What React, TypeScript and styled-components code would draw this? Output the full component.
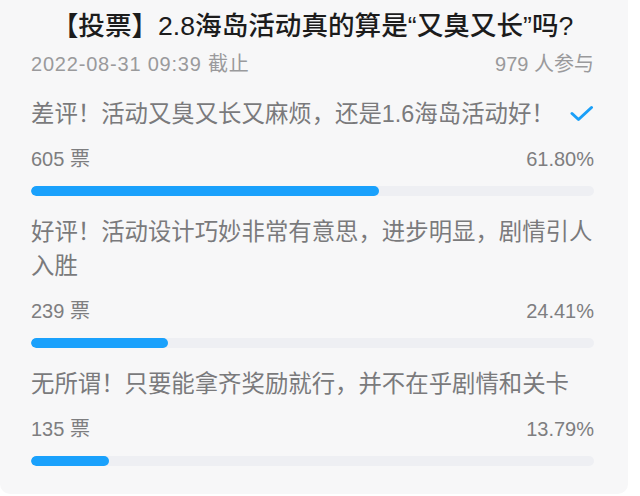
import React from 'react';
import styled, { createGlobalStyle } from 'styled-components';

const GlobalStyle = createGlobalStyle`
    body {
        margin: 0;
        background: #ffffff;
        font-family: 'Liberation Sans', 'Noto Sans CJK SC', sans-serif;
    }
`;

const options = [
    { text: '差评！活动又臭又长又麻烦，还是1.6海岛活动好！', votes: 605, percent: 61.8, chosen: true },
    { text: '好评！活动设计巧妙非常有意思，进步明显，剧情引人入胜', votes: 239, percent: 24.41, chosen: false },
    { text: '无所谓！只要能拿齐奖励就行，并不在乎剧情和关卡', votes: 135, percent: 13.79, chosen: false }
];

function CheckMark() {
    return (
        <CheckIcon width='24' height='18' viewBox='0 0 24 18'>
            <path d='M2 8.5 L8.5 14.5 L21.5 2.5' fill='none' stroke='#1a9ff8' strokeWidth='3' strokeLinecap='round' strokeLinejoin='round' />
        </CheckIcon>
    );
}

export default function App() {
    return (
        <Card>
            <GlobalStyle />
            <Title>【投票】2.8海岛活动真的算是“又臭又长”吗?</Title>
            <Meta>
                <DateText>2022-08-31 09:39 截止</DateText>
                <span>979 人参与</span>
            </Meta>
            {options.map((o) => (
                <Option key={o.text}>
                    <OptionHead>
                        <OptionText>{o.text}</OptionText>
                        {o.chosen && <CheckMark />}
                    </OptionHead>
                    <Counts>
                        <span>{o.votes} 票</span>
                        <span>{o.percent.toFixed(2)}%</span>
                    </Counts>
                    <Track>
                        <Fill style={{ width: `${o.percent}%` }} />
                    </Track>
                </Option>
            ))}
        </Card>
    );
}

const Card = styled.div`
    width: 628px;
    height: 494px;
    box-sizing: border-box;
    padding: 10px 34px 0 31px;
    background: #f7f7f8;
    border-radius: 0 0 10px 10px;
`;

const Title = styled.div`
    font-size: 26.6px;
    line-height: 32px;
    font-weight: 500;
    color: #1c1c1c;
    text-align: center;
    white-space: nowrap;
`;

const Meta = styled.div`
    display: flex;
    justify-content: space-between;
    margin-top: 8px;
    font-size: 20px;
    line-height: 28px;
    color: #9a9a9c;
`;

const DateText = styled.span`
    letter-spacing: 0.8px;
`;

const Option = styled.div`
    margin-top: 19px;
`;

const OptionHead = styled.div`
    display: flex;
    align-items: center;
    gap: 8px;
`;

const OptionText = styled.div`
    flex: 1;
    min-width: 0;
    font-size: 23.4px;
    line-height: 34px;
    color: #7a7a7c;
`;

const CheckIcon = styled.svg`
    flex-shrink: 0;
`;

const Counts = styled.div`
    display: flex;
    justify-content: space-between;
    margin-top: 14px;
    font-size: 20px;
    line-height: 28px;
    color: #7e7e80;
`;

const Track = styled.div`
    margin-top: 13px;
    height: 10px;
    border-radius: 5px;
    background: #eeeff3;
    overflow: hidden;
`;

const Fill = styled.div`
    height: 100%;
    border-radius: 5px;
    background: #1aa1fc;
`;
